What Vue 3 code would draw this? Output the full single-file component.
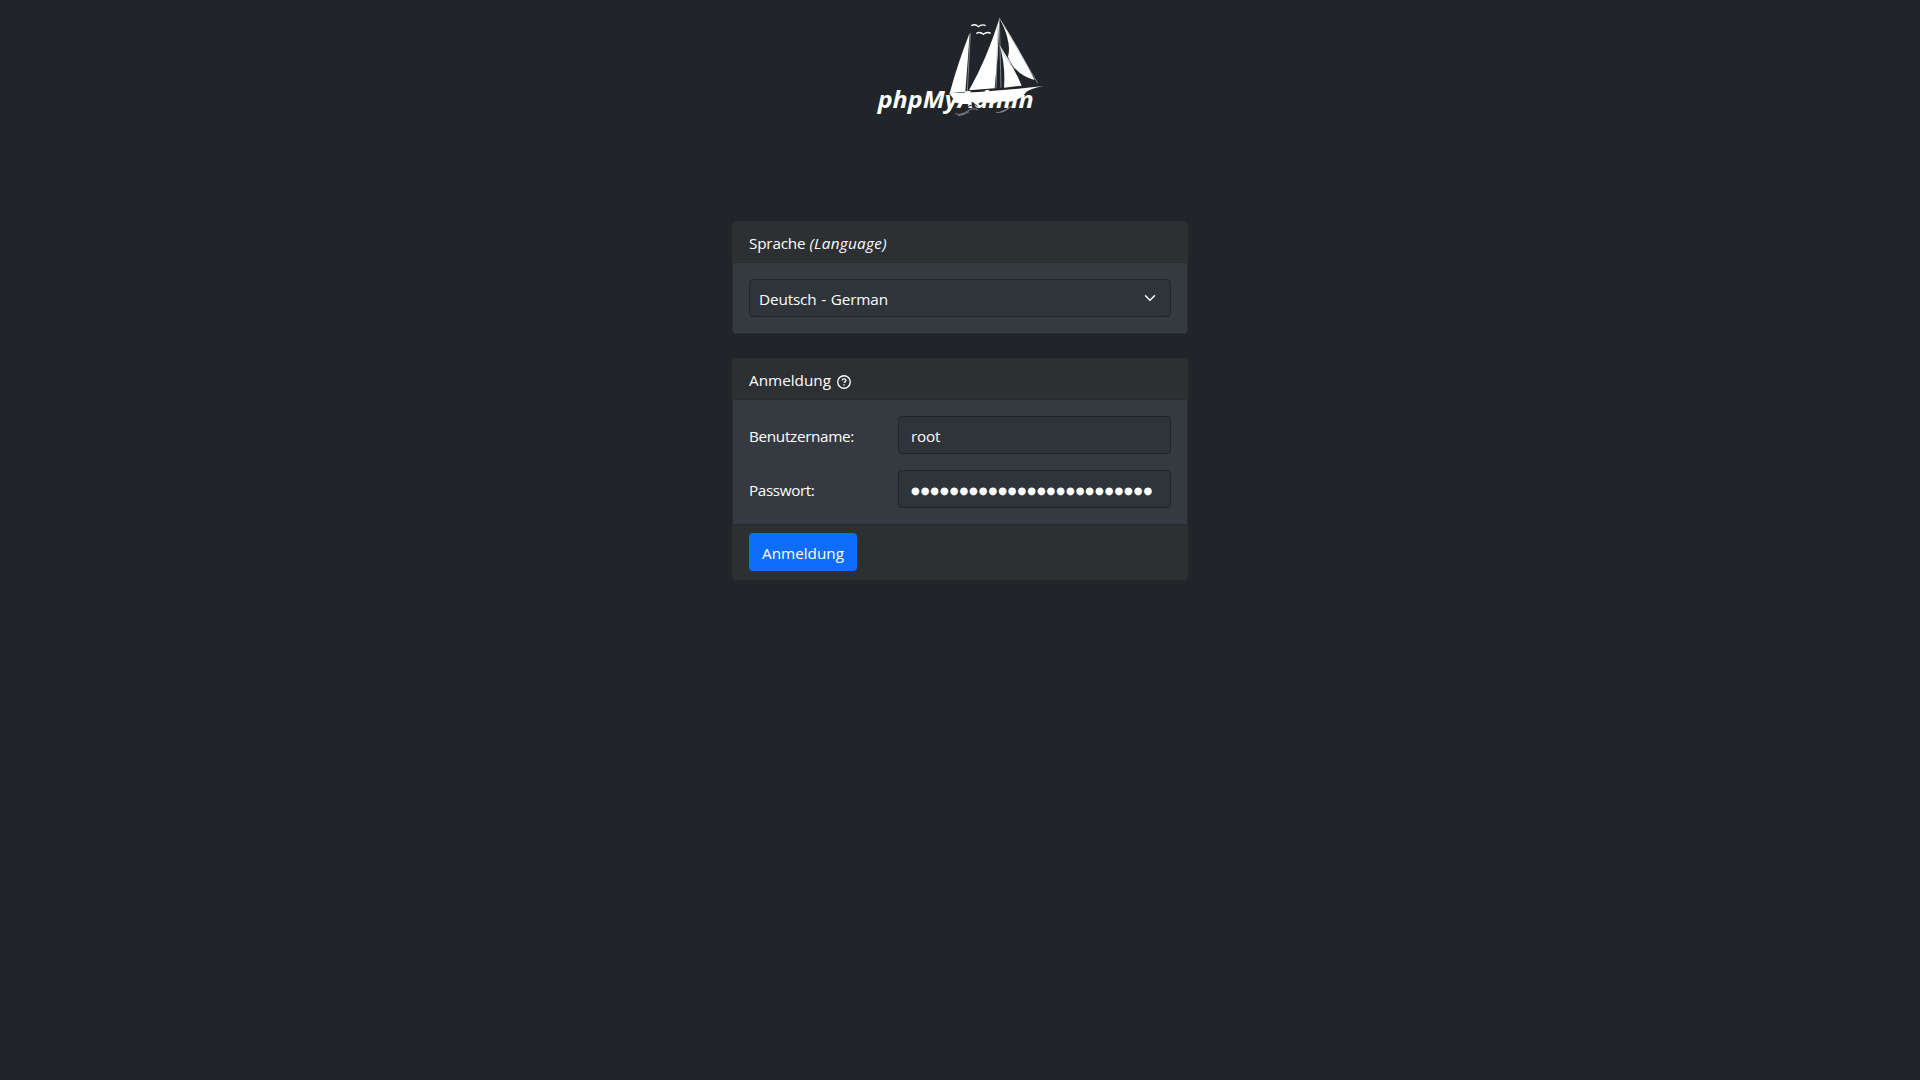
<script setup>
import { ref } from 'vue'

const username = ref('root')
const mask = '●'.repeat(25)
</script>

<template>
  <main class="page">
    <svg class="logo" viewBox="0 0 600 390" aria-label="phpMyAdmin">
      <text class="brand" x="53" y="323" textLength="468" lengthAdjust="spacingAndGlyphs">phpMyAdmin</text>
      <g fill="#fff">
        <path d="M329 99Q293 190 269 280L316 275Q323 188 329 99Z" />
        <path d="M418 57Q379 180 327 271L404 265Q416 160 418 57Z" />
        <path d="M420 57Q456 128 444 170Q465 224 524 240Q479 148 420 57Z" />
        <path d="M419 136Q437 197 432 263L485 257Q458 193 419 136Z" />
        <path d="M267 280Q405 276 550 258Q512 266 499 275Q484 299 450 305L414 304L405 310L363 307L351 313L337 306L310 312L286 308L278 293Z" />
      </g>
      <g fill="none" stroke="#aeb1b4" stroke-width="2">
        <path d="M331 99L322 275M414 75L408 265M418 55L423 263" />
        <path d="M418 54L533 249M419 136Q436 180 465 208" />
        <path d="M286 341Q303 347 321 334T354 330M294 347Q316 344 327 335M408 337Q430 340 447 323L456 318M422 335Q439 331 447 323" />
      </g>
      <path d="M286 324Q303 330 326 319T352 320" fill="none" stroke="#212529" stroke-width="3" />
      <path d="M334 77Q346 70 355 80Q366 71 377 77M349 100Q361 94 370 103Q381 94 392 100" fill="none" stroke="#fff" stroke-width="4" />
    </svg>

    <section class="card language">
      <header class="card-header"><span class="t">Sprache</span><em class="t lang">(Language)</em></header>
      <div class="card-body">
        <div class="control select" role="combobox" tabindex="0">
          <span class="t german">Deutsch - German</span>
          <svg class="chevron" viewBox="0 0 16 16"><path d="m2 5 6 6 6-6" /></svg>
        </div>
      </div>
    </section>

    <form class="card" @submit.prevent>
      <header class="card-header">
        <span class="t login">Anmeldung</span>
        <svg class="help" viewBox="0 0 14 14">
          <circle cx="7" cy="7" r="6.25" />
          <path d="M5.2 5.5C5.2 3.4 8.9 3.4 8.9 5.4C8.9 6.7 7.1 6.7 7.1 8.1M7.1 9.2V10.5" />
        </svg>
      </header>
      <div class="card-body fields">
        <div class="row">
          <label class="t user" for="user">Benutzername:</label>
          <input id="user" v-model="username" class="control t" spellcheck="false" />
        </div>
        <div class="row">
          <label class="t pass">Passwort:</label>
          <div class="control"><span class="mask">{{ mask }}</span></div>
        </div>
      </div>
      <footer class="card-footer"><button class="t login" type="submit">Anmeldung</button></footer>
    </form>
  </main>
</template>

<style>
body {
  background: #212529;
}
</style>

<style scoped>
.page {
  display: flex;
  flex-direction: column;
  align-items: center;
  min-height: 1080px;
  background: #212529;
  color: #fff;
  font: 15.3px/24px "Open Sans", "Noto Sans", sans-serif;
}
.page * {
  box-sizing: border-box;
}
.logo {
  width: 200px;
  height: 130px;
  margin-bottom: 91px;
}
.brand {
  fill: #fff;
  font: italic 700 68px "Open Sans", sans-serif;
}
.t {
  letter-spacing: -0.2px;
  white-space: pre;
}
.card {
  width: 456px;
  background: #343a40;
  border: 1px solid #2c3033;
  border-radius: 4px;
  overflow: hidden;
}
.language {
  margin-bottom: 24px;
}
.card-header {
  display: flex;
  align-items: center;
  height: 41px;
  padding: 1px 16px 0;
  background: #2c3033;
  border-bottom: 1px solid #272b2e;
}
.lang {
  margin-left: 4px;
  letter-spacing: 0.3px;
}
.german {
  letter-spacing: -0.14px;
  word-spacing: 0.9px;
}
.login {
  letter-spacing: -0.02px;
}
.user {
  letter-spacing: -0.33px;
}
.pass {
  letter-spacing: -0.4px;
}
.card-body {
  padding: 16px;
}
.language .card-body {
  height: 70px;
}
.control {
  display: flex;
  align-items: center;
  height: 38px;
  padding: 1px 12px 0;
  border: 1px solid #212529;
  border-radius: 4px;
  background: #2f333a;
  color: #fff;
}
.select {
  justify-content: space-between;
  padding: 1px 12px 0 9px;
}
.chevron {
  width: 16px;
  height: 12px;
  margin-bottom: 2px;
  fill: none;
  stroke: #fff;
  stroke-width: 2;
  stroke-linecap: round;
  stroke-linejoin: round;
}
.help {
  width: 14px;
  height: 14px;
  margin: 4px 0 0 6px;
  fill: none;
  stroke: #fff;
  stroke-width: 1.35;
}
.fields {
  display: flex;
  flex-direction: column;
  gap: 16px;
  height: 124px;
}
.row {
  display: flex;
  align-items: center;
  justify-content: space-between;
}
.row label {
  padding-top: 2px;
}
.row .control {
  width: 273px;
  outline: none;
}
input,
button {
  font: inherit;
}
.mask {
  padding-top: 2px;
  font-family: "DejaVu Sans", sans-serif;
  font-size: 10px;
  letter-spacing: 0.96px;
  white-space: nowrap;
}
.card-footer {
  display: flex;
  height: 55px;
  padding: 8px 16px;
  background: #2c3033;
  border-top: 1px solid #272b2e;
}
button {
  width: 108px;
  height: 38px;
  padding: 1px 0 0;
  border: 0;
  border-radius: 4px;
  background: #0d6efd;
  color: #fff;
}
</style>
